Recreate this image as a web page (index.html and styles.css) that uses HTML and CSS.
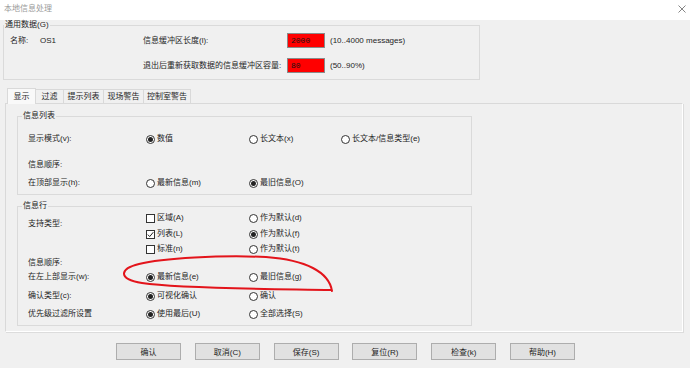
FILE: index.html
```html
<!DOCTYPE html>
<html lang="zh-CN">
<head>
  <meta charset="UTF-8">
  <title>本地信息处理</title>
  <link rel="stylesheet" href="styles.css">
</head>
<body>
  <div class="window">
    <div class="titlebar">
      <span class="title">本地信息处理</span>
      <svg class="close" width="8" height="8" viewBox="0 0 8 8">
        <path d="M0.5 0.5 L7.5 7.5 M7.5 0.5 L0.5 7.5" stroke="#777" stroke-width="0.9" fill="none"/>
      </svg>
    </div>

    <fieldset class="general">
      <legend>通用数据(G)</legend>
      <div class="general-grid">
        <span>名称:</span>
        <span>OS1</span>
        <span>信息缓冲区长度(l):</span>
        <span class="red-input">2000</span>
        <span class="hint">(10..4000 messages)</span>

        <span></span>
        <span></span>
        <span>退出后重新获取数据的信息缓冲区容量:</span>
        <span class="red-input">80</span>
        <span class="hint">(50..90%)</span>
      </div>
    </fieldset>

    <div class="tabs">
      <div class="tab active">显示</div>
      <div class="tab t2">过滤</div>
      <div class="tab t4">提示列表</div>
      <div class="tab t4">现场警告</div>
      <div class="tab t5">控制室警告</div>
    </div>

    <div class="panel">
      <fieldset class="group list-group">
        <legend>信息列表</legend>
        <div class="opt-grid">
          <span class="lbl">显示模式(v):</span>
          <span class="opt"><i class="radio on"></i>数值</span>
          <span class="opt"><i class="radio"></i>长文本(x)</span>
          <span class="opt"><i class="radio"></i>长文本/信息类型(e)</span>

          <span class="lbl">信息顺序:</span>
          <span></span><span></span><span></span>

          <span class="lbl">在顶部显示(h):</span>
          <span class="opt"><i class="radio"></i>最新信息(m)</span>
          <span class="opt"><i class="radio on"></i>最旧信息(O)</span>
          <span></span>
        </div>
      </fieldset>

      <fieldset class="group line-group">
        <legend>信息行</legend>
        <div class="opt-grid">
          <span class="lbl shift">支持类型:</span>
          <span class="opt"><i class="check"></i>区域(A)</span>
          <span class="opt"><i class="radio"></i>作为默认(d)</span>
          <span></span>

          <span></span>
          <span class="opt"><i class="check"><svg width="7" height="7" viewBox="0 0 7 7"><path d="M0.8 3.6 L2.7 5.6 L6.3 1.2" stroke="#222" stroke-width="1" fill="none"/></svg></i>列表(L)</span>
          <span class="opt"><i class="radio on"></i>作为默认(f)</span>
          <span></span>

          <span></span>
          <span class="opt"><i class="check"></i>标准(n)</span>
          <span class="opt"><i class="radio"></i>作为默认(t)</span>
          <span></span>

          <span class="lbl">信息顺序:</span>
          <span></span><span></span><span></span>

          <span class="lbl">在左上部显示(w):</span>
          <span class="opt"><i class="radio on"></i>最新信息(e)</span>
          <span class="opt"><i class="radio"></i>最旧信息(g)</span>
          <span></span>

          <span class="lbl">确认类型(c):</span>
          <span class="opt"><i class="radio on"></i>可视化确认</span>
          <span class="opt"><i class="radio"></i>确认</span>
          <span></span>

          <span class="lbl">优先级过滤所设置</span>
          <span class="opt"><i class="radio on"></i>使用最后(U)</span>
          <span class="opt"><i class="radio"></i>全部选择(S)</span>
          <span></span>
        </div>
      </fieldset>
    </div>

    <div class="buttons">
      <button type="button">确认</button>
      <button type="button">取消(C)</button>
      <button type="button">保存(S)</button>
      <button type="button">复位(R)</button>
      <button type="button">检查(k)</button>
      <button type="button">帮助(H)</button>
    </div>

    <!-- hand-drawn annotation over the dialog -->
    <svg class="mark" width="690" height="368" viewBox="0 0 690 368">
      <path d="M332 291 C329 272, 306 260, 266 257 C222 255, 162 258, 139 264 C119 269, 118 279, 142 283 C182 289, 282 289, 331 290"
            stroke="#e3141b" stroke-width="2" fill="none" stroke-linecap="round"/>
    </svg>
  </div>
</body>
</html>
```

FILE: styles.css
```css
body {
  margin: 0;
  background-color: #f0f0f0;
  font-family: 'Liberation Sans', 'Noto Sans CJK SC', sans-serif;
  font-size: 8px;
  color: #1e1e1e;
}

.window {
  position: relative;
  width: 690px;
  height: 368px;
  overflow: hidden;
}

.titlebar {
  height: 20px;
  background-color: #fff;
  display: flex;
  align-items: center;
  justify-content: space-between;
  padding: 0 4px;
  box-sizing: border-box;
}

.title {
  color: #9a9a9a;
  line-height: 10px;
  margin-top: -3px;
}

.close {
  margin-top: -2px;
}

fieldset {
  margin: 0;
  border: 1px solid #dadada;
  box-sizing: border-box;
}

legend {
  padding: 0 1px;
  line-height: 10px;
}

.general {
  width: 477px;
  margin-left: 3px;
  padding: 3px 0 6px 6px;
}

.general legend {
  margin-left: -6px;
}

.general-grid {
  display: grid;
  grid-template-columns: 30px 103px 144px 38px auto;
  grid-template-rows: 15px 15px;
  row-gap: 10px;
  align-items: center;
  line-height: 10px;
}

.red-input {
  height: 15px;
  box-sizing: border-box;
  padding: 0 3px;
  background-color: #ff0000;
  border: 1px solid #8a8a8a;
  font-family: 'Liberation Mono', monospace;
  line-height: 13px;
  color: #141414;
}

.hint {
  padding-left: 5px;
}

.tabs {
  display: flex;
  align-items: flex-end;
  height: 15px;
  margin-top: 8px;
  padding-left: 7px;
}

.tab {
  height: 14px;
  line-height: 13px;
  box-sizing: border-box;
  border: 1px solid #d9d9d9;
  border-bottom: none;
  margin-left: -1px;
  text-align: center;
  background-color: #f0f0f0;
}

.tab.active {
  width: 29px;
  height: 16px;
  margin-left: 0;
  margin-bottom: -1px;
  background-color: #f9f9f9;
  position: relative;
  z-index: 1;
  line-height: 15px;
}

.t2 { width: 29px; }
.t4 { width: 41px; }
.t5 { width: 48px; }

.panel {
  width: 678px;
  height: 229px;
  margin-left: 5px;
  box-sizing: border-box;
  border: 1px solid #d9d9d9;
  border-right-color: #fff;
  border-bottom-color: #fff;
  box-shadow: 1px 1px 0 #dcdcdc;
  padding: 7px 0 0 11px;
}

.group {
  width: 455px;
  padding: 0 0 5px 10px;
}

.group legend {
  margin-left: -6px;
}

.line-group {
  margin-top: 6px;
}

.opt-grid {
  display: grid;
  grid-template-columns: 118px 103px 92px auto;
  line-height: 12px;
}

.list-group .opt-grid {
  padding-top: 12px;
  grid-template-rows: 26px 18px 12px;
}

.line-group .opt-grid {
  padding-top: 1px;
  grid-template-rows: 16px 15px 14px 14px 19px 18px 12px;
}

.lbl.shift {
  margin-top: 6px;
}

.opt {
  display: flex;
  align-items: center;
  gap: 2px;
  height: 12px;
}

.radio {
  width: 9px;
  height: 9px;
  box-sizing: border-box;
  border: 1px solid #333;
  border-radius: 50%;
  background-color: #fff;
  display: flex;
  align-items: center;
  justify-content: center;
}

.radio.on::after {
  content: '';
  width: 5px;
  height: 5px;
  border-radius: 50%;
  background-color: #222;
}

.check {
  width: 9px;
  height: 9px;
  box-sizing: border-box;
  border: 1px solid #333;
  background-color: #fff;
  display: flex;
  align-items: center;
  justify-content: center;
}

.buttons {
  display: flex;
  gap: 13.8px;
  margin: 11px 0 0 116px;
}

button {
  width: 65px;
  height: 17px;
  padding: 0;
  box-sizing: border-box;
  background-color: #e1e1e1;
  border: 1px solid #adadad;
  font-family: 'Liberation Sans', 'Noto Sans CJK SC', sans-serif;
  font-size: 8px;
  color: #1e1e1e;
}

.mark {
  position: absolute;
  top: 0;
  left: 0;
  pointer-events: none;
}
```
